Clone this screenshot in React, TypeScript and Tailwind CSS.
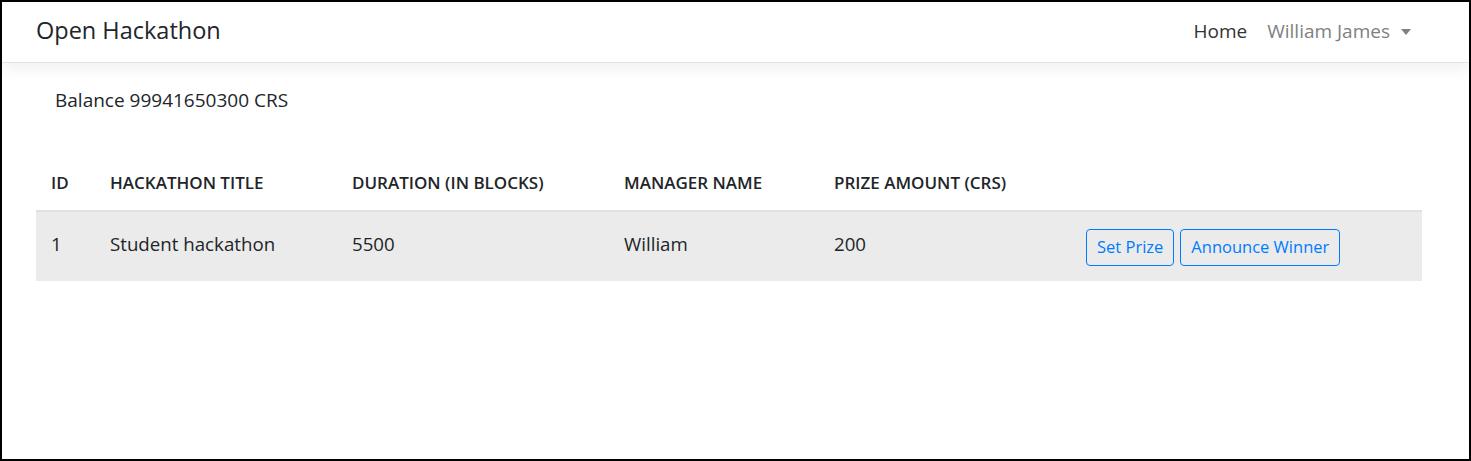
const columns = [
  { label: 'ID', width: 'w-[59px]' },
  { label: 'Hackathon Title', width: 'w-[242px]' },
  { label: 'Duration (in blocks)', width: 'w-[272px]' },
  { label: 'Manager Name', width: 'w-[210px]' },
  { label: 'Prize Amount (CRS)', width: 'w-[252px]' },
  { label: '', width: '' },
];

const hackathons = [
  { id: 1, title: 'Student hackathon', duration: 5500, manager: 'William', prize: 200 },
];

function Navbar() {
  return (
    <nav className="relative z-10 flex h-[61px] items-center justify-between border-b border-[#e3e3e3] bg-white pb-[2px] pl-[34px] pr-[58px] shadow-[0_6px_14px_rgba(0,0,0,0.06)]">
      <a className="text-[23.5px] text-[#212529]">Open Hackathon</a>
      <div className="flex items-center gap-[20px] text-[19px]">
        <a className="text-[#333]">Home</a>
        <a className="flex items-center gap-[11px] text-[#808080]">
          William James
          <span className="mt-[1px] h-0 w-0 border-x-[5px] border-t-[6px] border-x-transparent border-t-[#808080]" />
        </a>
      </div>
    </nav>
  );
}

export default function App() {
  return (
    <div
      className="h-[461px] w-[1471px] overflow-hidden border-2 border-black bg-white text-[#212529]"
      style={{ fontFamily: '"Open Sans", "Noto Sans", sans-serif' }}
    >
      <Navbar />
      <main className="pl-[34px]">
        <p className="ml-[19px] mt-[23px] text-[19px] leading-[28px]">Balance 99941650300 CRS</p>
        <table className="mt-[37px] w-[1386px] table-fixed border-collapse">
          <thead>
            <tr>
              {columns.map((col) => (
                <th
                  key={col.label}
                  className={`${col.width} border-b-2 border-[#dee2e6] px-[15px] pb-[14px] pt-[19px] text-left text-[17px] font-semibold uppercase leading-[26px]`}
                >
                  {col.label}
                </th>
              ))}
            </tr>
          </thead>
          <tbody>
            {hackathons.map((h) => (
              <tr key={h.id} className="bg-[#ebebeb] text-[18.7px]">
                <td className="px-[15px] pb-[17px] pt-[17px] align-top leading-[30px]">{h.id}</td>
                <td className="px-[15px] pb-[17px] pt-[17px] align-top leading-[30px]">{h.title}</td>
                <td className="px-[15px] pb-[17px] pt-[17px] align-top leading-[30px]">{h.duration}</td>
                <td className="px-[15px] pb-[17px] pt-[17px] align-top leading-[30px]">{h.manager}</td>
                <td className="px-[15px] pb-[17px] pt-[17px] align-top leading-[30px]">{h.prize}</td>
                <td className="px-[15px] pb-[15px] pt-[17px] align-top">
                  <div className="flex gap-[6px]">
                    <button className="h-[37px] rounded-[4px] border border-[#007bff] px-[10px] text-[16.5px] text-[#007bff]">
                      Set Prize
                    </button>
                    <button className="h-[37px] rounded-[4px] border border-[#007bff] px-[10px] text-[16.5px] text-[#007bff]">
                      Announce Winner
                    </button>
                  </div>
                </td>
              </tr>
            ))}
          </tbody>
        </table>
      </main>
    </div>
  );
}
